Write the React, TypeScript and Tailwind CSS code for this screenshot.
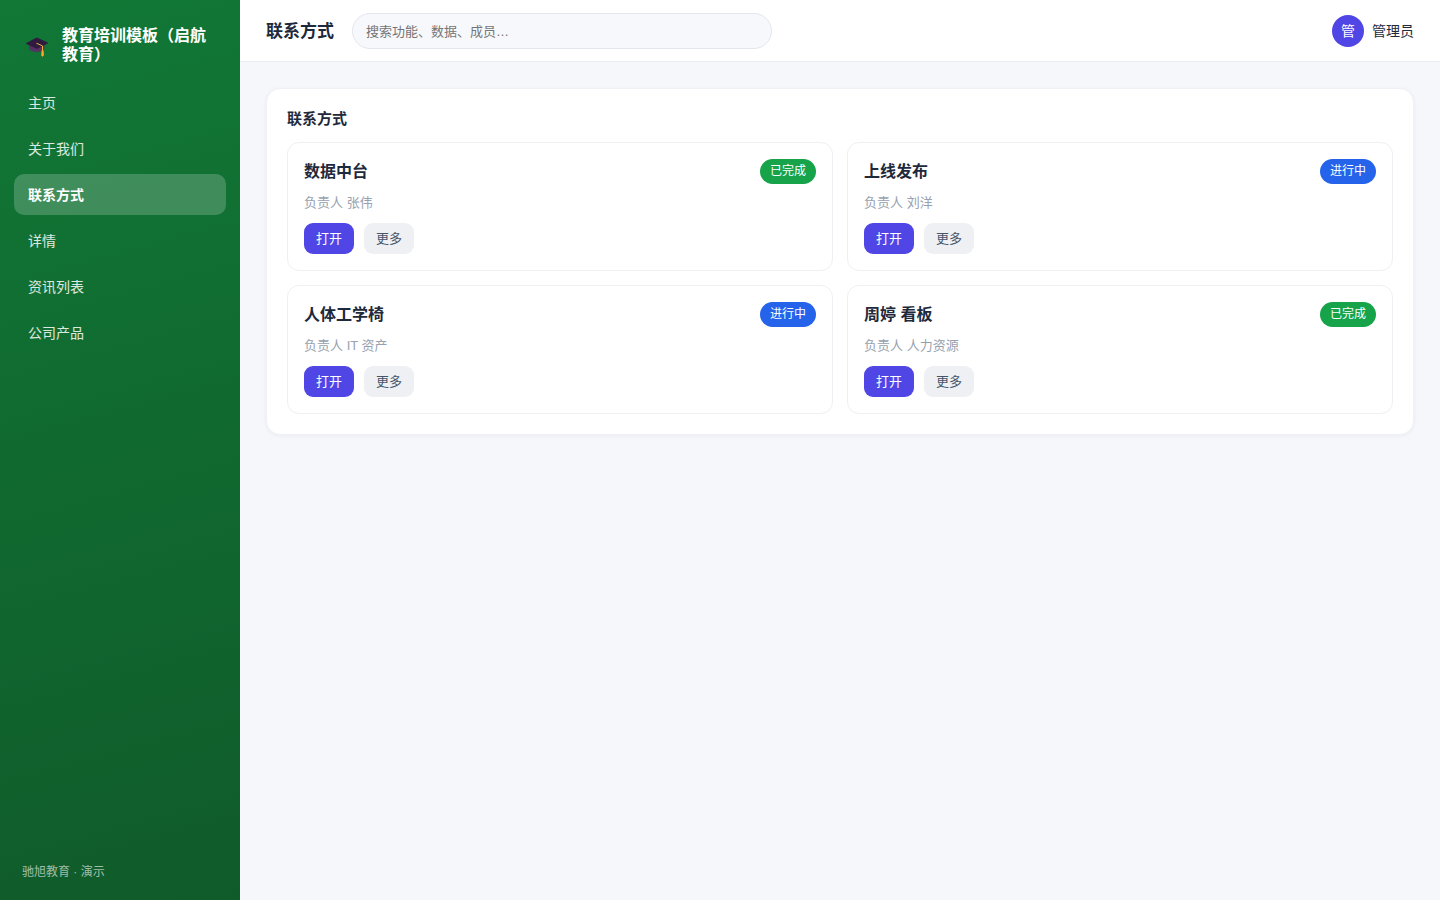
type Status = '已完成' | '进行中'

type ContactItem = {
  title: string
  owner: string
  status: Status
}

const navItems = ['主页', '关于我们', '联系方式', '详情', '资讯列表', '公司产品']

const contactItems: ContactItem[] = [
  { title: '数据中台', owner: '张伟', status: '已完成' },
  { title: '上线发布', owner: '刘洋', status: '进行中' },
  { title: '人体工学椅', owner: 'IT 资产', status: '进行中' },
  { title: '周婷 看板', owner: '人力资源', status: '已完成' },
]

const statusClasses: Record<Status, string> = {
  已完成: 'bg-[#16a34a]',
  进行中: 'bg-[#2563eb]',
}

function GraduationCap() {
  return (
    <svg className="h-6 w-[22px] shrink-0" viewBox="0 0 22 24" aria-hidden="true">
      <path d="M3 11v4.5c.6 2 3.6 3.4 7.8 3.4s7-1.4 7.6-3.4V11z" fill="#543363" />
      <path d="M11.6 4.8 21.6 9.6c.5.3.5.7 0 1L12 15.4c-.7.3-1.3.3-2 0L.4 10.9c-.5-.3-.5-.7 0-1l9.8-5.1c.5-.2.9-.2 1.4 0z" fill="#2f1b40" />
      <path d="M10.8 10.4l5.7 2.5v5" fill="none" stroke="#fbb034" strokeWidth="1" strokeLinecap="round" strokeLinejoin="round" />
      <path d="M15.6 17.4h1.9l.5 4.6-1.3 1.7-1.5-1.2z" fill="#f9a825" />
    </svg>
  )
}

function Sidebar() {
  return (
    <aside className="flex w-60 shrink-0 flex-col bg-linear-[165deg,#117836,#105b2a] px-3.5 py-[18px] text-white">
      <div className="flex items-center gap-3.5 px-3 pt-2 pb-[18px]">
        <GraduationCap />
        <p className="text-base leading-[19px] font-bold">教育培训模板（启航教育）</p>
      </div>
      <nav className="flex flex-col gap-[5px]">
        {navItems.map((item) => {
          const isActive = item === '联系方式'
          return (
            <a
              key={item}
              href="#"
              aria-current={isActive ? 'page' : undefined}
              className={
                isActive
                  ? 'rounded-[10px] bg-white/20 px-3.5 pt-[11px] pb-[9px] text-sm leading-[21px] font-bold'
                  : 'rounded-[10px] px-3.5 pt-[11px] pb-[9px] text-sm leading-[21px] text-white/85'
              }
            >
              {item}
            </a>
          )
        })}
      </nav>
      <p className="mt-auto px-2 text-xs leading-5 text-white/60">驰旭教育 · 演示</p>
    </aside>
  )
}

function TopBar() {
  return (
    <header className="flex items-center gap-[18px] border-b border-[#ebedf2] bg-white px-[26px] pt-[13px] pb-3">
      <h1 className="shrink-0 pt-0.5 text-[17px] leading-6 font-bold">联系方式</h1>
      <input
        type="search"
        aria-label="搜索"
        placeholder="搜索功能、数据、成员…"
        className="h-9 w-full max-w-[420px] rounded-full border border-[#e4e6ef] bg-[#f7f8fc] px-[13px] text-[13px] placeholder:text-[#757575]"
      />
      <div className="ml-auto flex shrink-0 items-center gap-2 text-sm">
        <span className="flex h-8 w-8 items-center justify-center rounded-full bg-[#4f46e5] text-white">管</span>
        <span>管理员</span>
      </div>
    </header>
  )
}

function ContactCard({ item }: { item: ContactItem }) {
  return (
    <article className="rounded-xl border border-[#eef0f3] p-4">
      <div className="flex items-center justify-between">
        <h3 className="text-base leading-[25px] font-bold">{item.title}</h3>
        <span className={`rounded-full px-2.5 text-xs leading-[25px] text-white ${statusClasses[item.status]}`}>
          {item.status}
        </span>
      </div>
      <p className="mt-[9px] text-[13px] leading-5 text-[#98a1b0]">负责人 {item.owner}</p>
      <div className="mt-2.5 flex gap-2.5 text-[13px] leading-[19px]">
        <button type="button" className="rounded-[9px] bg-[#4f46e5] px-3 py-1.5 text-white">
          打开
        </button>
        <button type="button" className="rounded-[9px] bg-[#eef0f4] px-3 py-1.5 text-[#475569]">
          更多
        </button>
      </div>
    </article>
  )
}

export default function App() {
  return (
    <div className="flex min-h-screen bg-[#f5f7fb] font-['Liberation_Sans','Noto_Sans_CJK_SC',sans-serif] text-[#1e293b]">
      <Sidebar />
      <div className="min-w-0 flex-1">
        <TopBar />
        <main className="p-[26px]">
          <section className="rounded-[14px] border border-[#f0f1f5] bg-white p-5 shadow-[0_1px_4px_rgba(30,41,90,0.05)]">
            <h2 className="mb-3.5 text-[15px] leading-[19px] font-bold">联系方式</h2>
            <div className="grid grid-cols-2 gap-3.5">
              {contactItems.map((item) => (
                <ContactCard key={item.title} item={item} />
              ))}
            </div>
          </section>
        </main>
      </div>
    </div>
  )
}
